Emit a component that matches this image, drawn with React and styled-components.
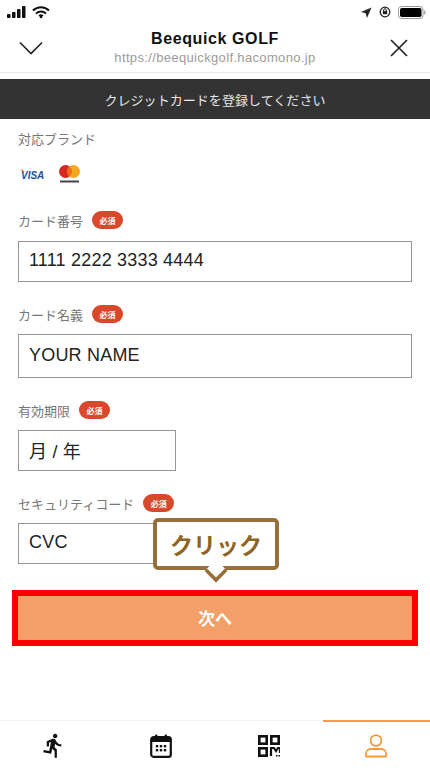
import React from "react";
import styled, { createGlobalStyle } from "styled-components";
import { MdDirectionsRun } from "react-icons/md";

const Global = createGlobalStyle`
  html, body { margin: 0; padding: 0; background: #fff; }
  * { box-sizing: border-box; }
  body { font-family: "Liberation Sans", "Noto Sans CJK JP", sans-serif; }
`;
const Page = styled.div`
  position: relative; width: 430px; height: 770px; overflow: hidden;
  display: flex; flex-direction: column; background: #fff;
`;
const StatusBar = styled.div`
  height: 24px; padding: 0 4px 0 7px; display: flex; align-items: center; justify-content: space-between;
`;
const StatusGroup = styled.div`display: flex; align-items: center; gap: ${p => p.$gap}px;`;
const Header = styled.header`
  height: 49px; padding: 0 22px 0 19px; display: flex; align-items: center; justify-content: space-between;
  border-bottom: 1px solid #e8e8e8;
`;
const HeaderTitle = styled.div`
  flex: 1; text-align: center; display: flex; flex-direction: column; align-items: center; margin: -4px 3px 0 0;
`;
const SiteName = styled.div`font-size: 16px; font-weight: 700; color: #111; line-height: 22px; letter-spacing: 0.6px;`;
const SiteUrl = styled.div`font-size: 13px; color: #9b9b9b; line-height: 15px; letter-spacing: 0.35px;`;
const Banner = styled.div`
  margin-top: 6px; height: 40px; background: #333; color: #e8e8e8; font-size: 13px;
  display: flex; align-items: center; justify-content: center; letter-spacing: 0.05px;
`;
const Form = styled.main`flex: 1; padding: 9px 18px 0; display: flex; flex-direction: column;`;
const LabelRow = styled.div`
  height: 20px; display: flex; align-items: center; gap: 9px; margin-top: ${p => p.$top || 0}px;
`;
const Label = styled.span`font-size: 13px; color: #777;`;
const Required = styled.span`
  width: 31px; height: 18px; border-radius: 9px; background: #d9482b; color: #fff; font-size: 8px; font-weight: 700;
  display: flex; align-items: center; justify-content: center;
`;
const Brands = styled.div`height: 20px; margin-top: 16px; display: flex; align-items: center; gap: 12px; padding-left: 2px;`;
const Field = styled.div`
  width: ${p => p.$w}px; height: ${p => p.$h || 41}px; margin-top: ${p => p.$top || 10}px; border: 1px solid #969696;
  padding: 0 10px 2px; display: flex; align-items: center; font-size: 18px; color: #222; letter-spacing: 0.2px;
  background: #fff;
`;
const NextButton = styled.button`
  margin: 26px 0 0 -6px; width: 406px; height: 56px; padding: 0 0 2px; border: 6px solid #fe0000; background: #f2a068;
  color: #fff; font: 700 17px "Liberation Sans", "Noto Sans CJK JP", sans-serif;
`;
const Tip = styled.div`
  position: absolute; left: 153px; top: 518px; width: 126px; height: 52px; border: 4px solid #95703a; border-radius: 5px;
  background: #fff; color: #8e6425; font-size: 23px; font-weight: 700;
  display: flex; align-items: center; justify-content: center;
  &::after {
    content: ""; position: absolute; left: 50px; bottom: -14px; width: 14px; height: 14px; background: #fff;
    border-right: 4px solid #95703a; border-bottom: 4px solid #95703a; transform: rotate(45deg) scale(.9);
  }
`;
const TabBar = styled.nav`
  height: 50px; border-top: 1px solid #f2f2f2; display: grid; grid-template-columns: repeat(4, 1fr);
`;
const Tab = styled.div`
  display: flex; align-items: center; justify-content: center; padding-bottom: 1px; margin-top: -1px;
  border-top: 2px solid ${p => (p.$active ? "#f59b50" : "transparent")};
`;

const Signal = () => (
  <svg width="20" height="13" viewBox="0 0 20 13" fill="#111">
    <rect x="0" y="8" width="3.5" height="4" rx=".8" /><rect x="5" y="6" width="3.5" height="6" rx=".8" />
    <rect x="10" y="3" width="3.5" height="9" rx=".8" /><rect x="15" y="0" width="3.5" height="12" rx=".8" />
  </svg>
);
const Wifi = () => (
  <svg width="18" height="13" viewBox="0 0 18 13" fill="none" stroke="#111" strokeWidth="2">
    <path d="M1 4.5a11.5 11.5 0 0 1 16 0" /><path d="M4 7.6a7.2 7.2 0 0 1 10 0" /><circle cx="9" cy="11" r="1.3" fill="#111" stroke="none" />
    <path d="M7 10a3 3 0 0 1 4 0" strokeWidth="1.5" />
  </svg>
);
const Location = () => (
  <svg width="11" height="11" viewBox="0 0 11 11" fill="#222"><path d="M10.5.5 0 5l4.7 1.2L6 11z" /></svg>
);
const Lock = () => (
  <svg width="12" height="12" viewBox="0 0 12 12" fill="none">
    <circle cx="6" cy="6" r="4.8" stroke="#222" strokeWidth="1.3" /><rect x="3.8" y="5" width="4.4" height="3.2" fill="#222" />
    <path d="M4.7 5V4a1.3 1.3 0 0 1 2.6 0v1" stroke="#222" />
  </svg>
);
const Battery = () => (
  <svg width="28" height="13" viewBox="0 0 28 13">
    <rect x=".5" y=".5" width="24.5" height="12" rx="3" fill="none" stroke="#999" />
    <rect x="2" y="2" width="21.5" height="9" rx="1.8" fill="#000" /><rect x="26" y="4.5" width="1.5" height="4" rx=".7" fill="#aaa" />
  </svg>
);
const Chevron = () => (
  <svg width="24" height="14" viewBox="0 0 24 14" fill="none" stroke="#222" strokeWidth="1.6"><path d="M1 1.5 12 12.5 23 1.5" /></svg>
);
const Close = () => (
  <svg width="18" height="18" viewBox="0 0 18 18" fill="none" stroke="#222" strokeWidth="1.7"><path d="M1 1l16 16M17 1 1 17" /></svg>
);
const Visa = () => (
  <svg width="26" height="12" viewBox="0 0 26 12">
    <path d="M0 1.5h3l1 3z" fill="#e9a23b" />
    <text x="1" y="10.5" fontFamily="Liberation Sans" fontStyle="italic" fontWeight="700" fontSize="10" fill="#1d5294">VISA</text>
  </svg>
);
const Master = () => (
  <svg width="23" height="20" viewBox="0 0 23 20">
    <circle cx="7.5" cy="7.5" r="6.5" fill="#d7291f" /><circle cx="15.5" cy="7.5" r="6.5" fill="#f4a81f" />
    <path d="M11.5 2.4a6.5 6.5 0 0 1 0 10.2 6.5 6.5 0 0 1 0-10.2z" fill="#ee6a1d" />
    <rect x="2" y="16.5" width="19" height="2" fill="#444" />
  </svg>
);
const Calendar = () => (
  <svg width="22" height="24" viewBox="0 0 22 24">
    <rect x="1.2" y="3.2" width="19.6" height="19.6" rx="2.4" fill="none" stroke="#111" strokeWidth="2.2" />
    <rect x="1" y="3" width="20" height="5" fill="#111" /><rect x="5" y="0.5" width="2.4" height="5" rx="1" fill="#111" /><rect x="14.6" y="0.5" width="2.4" height="5" rx="1" fill="#111" />
    {[6, 10, 14].flatMap(x => [11, 15].map(y => <rect key={`${x}${y}`} x={x - .2} y={y} width="2.4" height="2.4" fill="#111" />))}
  </svg>
);
const Qr = () => (
  <svg width="22" height="22" viewBox="0 0 22 22" fill="none" stroke="#111" strokeWidth="2.6">
    <rect x="1.3" y="1.3" width="7.4" height="7.4" /><rect x="13.3" y="1.3" width="7.4" height="7.4" /><rect x="1.3" y="13.3" width="7.4" height="7.4" />
    <path d="M13 21v-8h3l2 3 2-3h2v5" strokeWidth="2.2" /><rect x="18" y="20" width="1.5" height="1.5" fill="#111" stroke="none" /><rect x="20.5" y="20" width="1.5" height="1.5" fill="#111" stroke="none" />
  </svg>
);
const User = () => (
  <svg width="22" height="24" viewBox="0 0 22 24" fill="none" stroke="#f59b3c" strokeWidth="1.8">
    <circle cx="11" cy="6.5" r="5.4" /><path d="M5.5 15h11a4.6 4.6 0 0 1 4.5 4.5v3H1v-3A4.6 4.6 0 0 1 5.5 15z" />
  </svg>
);

export default function App() {
  return (
    <Page>
      <Global />
      <StatusBar>
        <StatusGroup $gap={5}><Signal /><Wifi /></StatusGroup>
        <StatusGroup $gap={7}><Location /><Lock /><Battery /></StatusGroup>
      </StatusBar>
      <Header>
        <Chevron />
        <HeaderTitle>
          <SiteName>Beequick GOLF</SiteName>
          <SiteUrl>https://beequickgolf.hacomono.jp</SiteUrl>
        </HeaderTitle>
        <Close />
      </Header>
      <Banner>クレジットカードを登録してください</Banner>
      <Form>
        <LabelRow><Label>対応ブランド</Label></LabelRow>
        <Brands><Visa /><Master /></Brands>
        <LabelRow $top={26}><Label>カード番号</Label><Required>必須</Required></LabelRow>
        <Field $w={394} $top={11}>1111 2222 3333 4444</Field>
        <LabelRow $top={22}><Label>カード名義</Label><Required>必須</Required></LabelRow>
        <Field $w={394} $h={44}>YOUR NAME</Field>
        <LabelRow $top={22}><Label>有効期限</Label><Required>必須</Required></LabelRow>
        <Field $w={158}>月 / 年</Field>
        <LabelRow $top={22}><Label>セキュリティコード</Label><Required>必須</Required></LabelRow>
        <Field $w={158}>CVC</Field>
        <NextButton>次へ</NextButton>
      </Form>
      <TabBar>
        <Tab><MdDirectionsRun size={27} color="#111" /></Tab>
        <Tab><Calendar /></Tab>
        <Tab><Qr /></Tab>
        <Tab $active><User /></Tab>
      </TabBar>
      <Tip>クリック</Tip>
    </Page>
  );
}
